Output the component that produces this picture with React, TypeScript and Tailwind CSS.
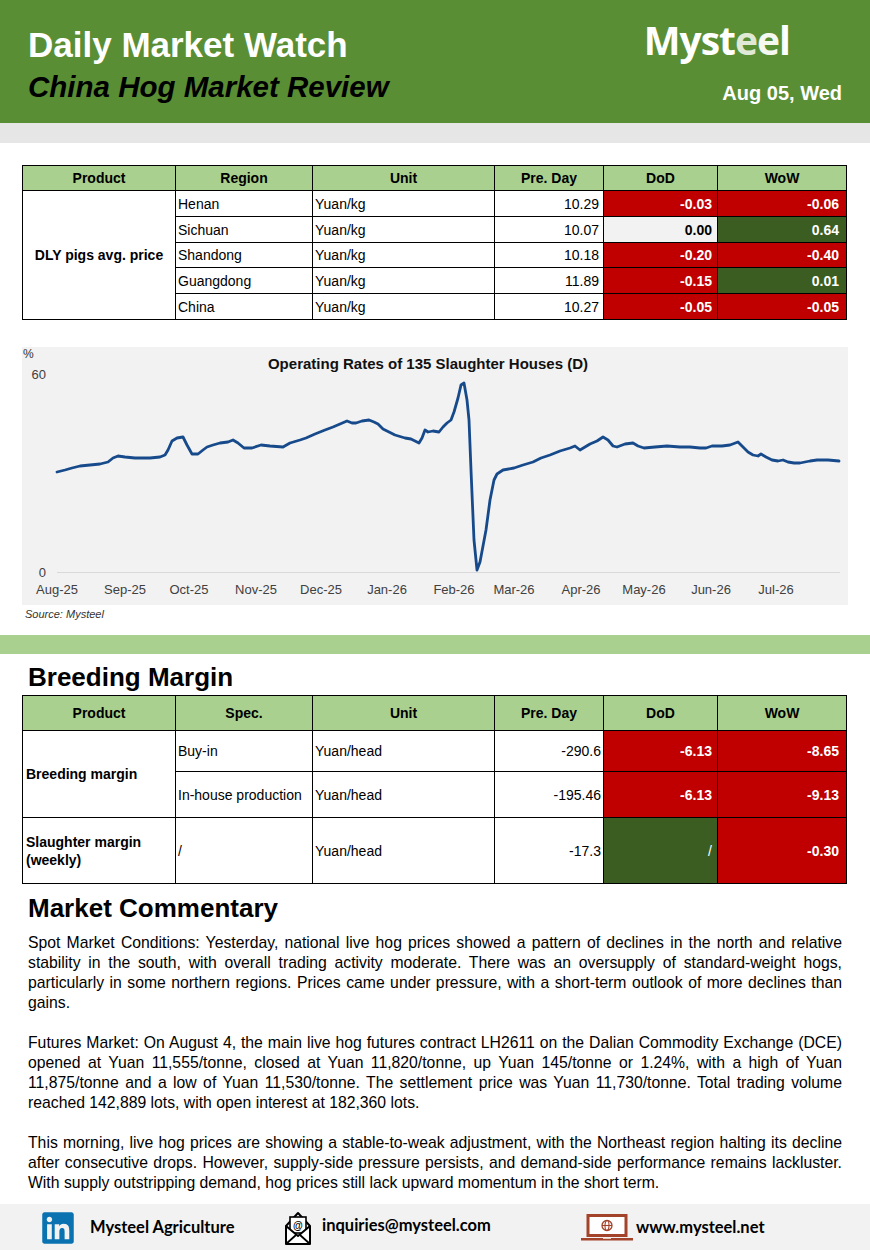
import { FaLinkedin } from 'react-icons/fa';

const FONT = "font-['Liberation_Sans',Arial,sans-serif]";

type Cell = { text: string; tone?: 'red' | 'green' | 'gray' };

const RED = 'bg-[#c00000] text-white font-bold';
const GREEN = 'bg-[#3b5d22] text-white font-bold';
const GRAY = 'bg-[#f2f2f2] text-black font-bold';

function tone(c: Cell) {
  if (c.tone === 'red') return RED;
  if (c.tone === 'green') return GREEN;
  if (c.tone === 'gray') return GRAY;
  return '';
}

const hogRows: { region: string; pre: string; dod: Cell; wow: Cell }[] = [
  { region: 'Henan', pre: '10.29', dod: { text: '-0.03', tone: 'red' }, wow: { text: '-0.06', tone: 'red' } },
  { region: 'Sichuan', pre: '10.07', dod: { text: '0.00', tone: 'gray' }, wow: { text: '0.64', tone: 'green' } },
  { region: 'Shandong', pre: '10.18', dod: { text: '-0.20', tone: 'red' }, wow: { text: '-0.40', tone: 'red' } },
  { region: 'Guangdong', pre: '11.89', dod: { text: '-0.15', tone: 'red' }, wow: { text: '0.01', tone: 'green' } },
  { region: 'China', pre: '10.27', dod: { text: '-0.05', tone: 'red' }, wow: { text: '-0.05', tone: 'red' } },
];

// chart line, page coordinates
const pts: [number, number][] = [
  [57, 472], [65, 470], [72, 468], [80, 466], [90, 465], [100, 464], [108, 462], [113, 458], [118, 456],
  [125, 457], [135, 458], [150, 458], [160, 457], [165, 455], [168, 450], [172, 441], [177, 438], [183, 437],
  [187, 445], [192, 454], [198, 454], [203, 450], [207, 447], [213, 445], [220, 443], [228, 442], [233, 440],
  [238, 443], [244, 448], [252, 448], [261, 445], [270, 446], [283, 447], [290, 443], [300, 440], [306, 438],
  [315, 434], [325, 430], [333, 427], [340, 424], [347, 421], [352, 423], [356, 423], [362, 421], [369, 420],
  [374, 422], [378, 424], [383, 429], [389, 432], [395, 435], [405, 438], [411, 439], [415, 441], [419, 443],
  [422, 438], [425, 430], [428, 432], [433, 431], [439, 432], [443, 427], [447, 423], [451, 420], [454, 412],
  [458, 398], [461, 385], [464, 383], [467, 400], [469, 420], [471, 470], [474, 540], [477, 570], [480, 562],
  [486, 530], [490, 500], [494, 480], [497, 474], [503, 470], [514, 468], [523, 465], [533, 462], [541, 458],
  [550, 455], [560, 451], [570, 448], [575, 446], [580, 450], [590, 444], [597, 441], [603, 437], [608, 440],
  [613, 446], [617, 447], [625, 444], [633, 443], [638, 446], [644, 448], [655, 447], [667, 446], [680, 447],
  [690, 447], [700, 448], [706, 448], [712, 446], [722, 446], [730, 445], [738, 442], [742, 446], [748, 452],
  [753, 455], [758, 456], [761, 454], [766, 457], [772, 460], [778, 461], [783, 460], [788, 462], [794, 463],
  [800, 463], [810, 461], [817, 460], [828, 460], [839, 461],
];

const months: [string, number][] = [
  ['Aug-25', 57], ['Sep-25', 125], ['Oct-25', 189], ['Nov-25', 256], ['Dec-25', 321], ['Jan-26', 387],
  ['Feb-26', 454], ['Mar-26', 514], ['Apr-26', 581], ['May-26', 644], ['Jun-26', 711], ['Jul-26', 776],
];

function Chart() {
  const line = pts.map(([x, y]) => `${x - 22},${y - 347}`).join(' ');
  return (
    <div className="mx-[22px] mt-[27px] h-[258px] bg-[#f2f2f2]">
      <svg width="825" height="258" viewBox="0 0 825 258" className="block">
        <text x="1" y="11" fontSize="12" fill="#333" fontFamily="Liberation Sans, Arial, sans-serif">%</text>
        <text x="406" y="22" fontSize="15" fontWeight="bold" textAnchor="middle" fill="#111" fontFamily="Liberation Sans, Arial, sans-serif">
          Operating Rates of 135 Slaughter Houses (D)
        </text>
        <text x="24" y="32" fontSize="13" textAnchor="end" fill="#404040" fontFamily="Liberation Sans, Arial, sans-serif">60</text>
        <text x="24" y="230" fontSize="13" textAnchor="end" fill="#404040" fontFamily="Liberation Sans, Arial, sans-serif">0</text>
        <line x1="35" y1="225.5" x2="818" y2="225.5" stroke="#d9d9d9" strokeWidth="1" />
        {months.map(([m, x]) => (
          <text key={m} x={x - 22} y="247" fontSize="13" textAnchor="middle" fill="#404040" fontFamily="Liberation Sans, Arial, sans-serif">
            {m}
          </text>
        ))}
        <polyline points={line} fill="none" stroke="#174a8b" strokeWidth="2.8" strokeLinejoin="round" strokeLinecap="round" />
      </svg>
    </div>
  );
}

function Colgroup() {
  return (
    <colgroup>
      <col className="w-[153px]" />
      <col className="w-[137px]" />
      <col className="w-[182px]" />
      <col className="w-[109px]" />
      <col className="w-[114px]" />
      <col className="w-[129px]" />
    </colgroup>
  );
}

const th = 'border border-black bg-[#a9d08e] font-bold text-center';
const td = 'border border-black';

function HeadRow({ second }: { second: string }) {
  return (
    <tr>
      <th className={th}>Product</th>
      <th className={th}>{second}</th>
      <th className={th}>Unit</th>
      <th className={th}>Pre. Day</th>
      <th className={th}>DoD</th>
      <th className={th}>WoW</th>
    </tr>
  );
}

function HogTable() {
  return (
    <table className="mx-[22px] mt-[22px] w-[824px] table-fixed border-collapse text-[14px] leading-[16px] text-black">
      <Colgroup />
      <thead className="h-[25px]">
        <HeadRow second="Region" />
      </thead>
      <tbody>
        {hogRows.map((r, i) => (
          <tr key={r.region} className={i === 2 ? 'h-[25px]' : 'h-[26px]'}>
            {i === 0 && (
              <td rowSpan={5} className={`${td} text-center font-bold`}>
                DLY pigs avg. price
              </td>
            )}
            <td className={`${td} pl-[2px]`}>{r.region}</td>
            <td className={`${td} pl-[2px]`}>Yuan/kg</td>
            <td className={`${td} pr-[4px] text-right`}>{r.pre}</td>
            <td className={`${td} pr-[5px] text-right ${tone(r.dod)}`}>{r.dod.text}</td>
            <td className={`${td} pr-[7px] text-right ${tone(r.wow)}`}>{r.wow.text}</td>
          </tr>
        ))}
      </tbody>
    </table>
  );
}

function MarginTable() {
  return (
    <table className="mx-[22px] mt-[4px] w-[824px] table-fixed border-collapse text-[14px] leading-[18px] text-black">
      <Colgroup />
      <thead className="h-[35px]">
        <HeadRow second="Spec." />
      </thead>
      <tbody>
        <tr className="h-[41px]">
          <td rowSpan={2} className={`${td} pl-[3px] font-bold`}>Breeding margin</td>
          <td className={`${td} pl-[2px]`}>Buy-in</td>
          <td className={`${td} pl-[2px]`}>Yuan/head</td>
          <td className={`${td} pr-[2px] text-right`}>-290.6</td>
          <td className={`${td} pr-[5px] text-right ${RED}`}>-6.13</td>
          <td className={`${td} pr-[7px] text-right ${RED}`}>-8.65</td>
        </tr>
        <tr className="h-[46px]">
          <td className={`${td} pl-[2px]`}>In-house production</td>
          <td className={`${td} pl-[2px]`}>Yuan/head</td>
          <td className={`${td} pr-[2px] text-right`}>-195.46</td>
          <td className={`${td} pr-[5px] text-right ${RED}`}>-6.13</td>
          <td className={`${td} pr-[7px] text-right ${RED}`}>-9.13</td>
        </tr>
        <tr className="h-[66px]">
          <td className={`${td} pl-[3px] font-bold`}>
            Slaughter margin
            <br />
            (weekly)
          </td>
          <td className={`${td} pl-[2px]`}>/</td>
          <td className={`${td} pl-[2px]`}>Yuan/head</td>
          <td className={`${td} pr-[2px] text-right`}>-17.3</td>
          <td className={`${td} pr-[5px] text-right ${GREEN} !font-normal`}>/</td>
          <td className={`${td} pr-[7px] text-right ${RED}`}>-0.30</td>
        </tr>
      </tbody>
    </table>
  );
}

function EnvelopeIcon() {
  return (
    <svg width="28" height="36" viewBox="0 0 28 36">
      <path d="M2 16 L14 3 L26 16" fill="#fff" stroke="#000" strokeWidth="2" strokeLinejoin="round" />
      <rect x="6" y="7" width="16" height="16" fill="#fff" stroke="#000" strokeWidth="1.6" />
      <text x="14" y="19" fontSize="10" textAnchor="middle" fill="#000" fontFamily="Liberation Sans, Arial, sans-serif">@</text>
      <path d="M2 16 V34 H26 V16 L14 26 Z" fill="#fff" stroke="#000" strokeWidth="2" strokeLinejoin="round" />
      <path d="M2 34 L12 25 M26 34 L16 25" stroke="#000" strokeWidth="1.8" />
    </svg>
  );
}

function LaptopIcon() {
  return (
    <svg width="54" height="28" viewBox="0 0 54 28">
      <rect x="8" y="1.5" width="38" height="20" fill="#fff" stroke="#a3432a" strokeWidth="3" />
      <circle cx="27" cy="11.5" r="5" fill="none" stroke="#a3432a" strokeWidth="1.3" />
      <ellipse cx="27" cy="11.5" rx="2" ry="5" fill="none" stroke="#a3432a" strokeWidth="1.1" />
      <line x1="22" y1="11.5" x2="32" y2="11.5" stroke="#a3432a" strokeWidth="1.1" />
      <path d="M1 24 H53 V26.5 H1 Z" fill="#a3432a" />
      <path d="M23 24 H31 V25 H23 Z" fill="#e9c9bd" />
    </svg>
  );
}

function Footer() {
  return (
    <div className="mt-[11px] flex h-[47px] items-center bg-[#f2f2f2] font-['Lato','Open_Sans',sans-serif] text-[16.5px] font-bold text-black">
      <div className="flex w-[284px] items-center pl-[40px]">
        <FaLinkedin className="text-[#0a72b1]" size={36} />
        <span className="ml-[14px]">Mysteel Agriculture</span>
      </div>
      <div className="flex w-[296px] items-center">
        <EnvelopeIcon />
        <span className="ml-[10px] -mt-[4px]">inquiries@mysteel.com</span>
      </div>
      <div className="flex items-center">
        <LaptopIcon />
        <span className="ml-[2px]">www.mysteel.net</span>
      </div>
    </div>
  );
}

export default function App() {
  return (
    <div className={`${FONT} w-[870px] bg-white text-black`}>
      {/* Header */}
      <div className="flex h-[123px] justify-between bg-[#5a8e34]">
        <div className="pl-[28px] pt-[28px]">
          <div className="text-[35px] font-bold leading-[34px] text-white">Daily Market Watch</div>
          <div className="mt-[10px] text-[29.5px] font-bold italic leading-[30px] text-black">China Hog Market Review</div>
        </div>
        <div className="flex flex-col items-end pr-[28px] pt-[17px]">
          <div className="mr-[52px] font-['Open_Sans',sans-serif] text-[39px] font-bold leading-[46px] tracking-[-1px] text-white">
            Myst<span className="text-[#dfe9d6]">e</span><span className="text-[#f4f8f0]">e</span>l
          </div>
          <div className="mt-[21px] text-[20px] font-bold leading-[19px] text-white">Aug 05, Wed</div>
        </div>
      </div>
      <div className="h-[20px] bg-[#e6e6e6]" />

      <HogTable />

      <Chart />
      <div className="pl-[25px] pt-[2px] text-[11px] italic leading-[14px] text-[#333]">Source: Mysteel</div>

      <div className="mt-[14px] h-[19px] bg-[#a9d08e]" />

      <h2 className="mt-[9px] pl-[28px] text-[26px] font-bold leading-[28px]">Breeding Margin</h2>
      <MarginTable />

      <h2 className="mt-[10px] pl-[28px] text-[26px] font-bold leading-[28px]">Market Commentary</h2>
      <div className="mt-[11px] px-[28px] text-justify text-[15.75px] leading-[20px]">
        <p className="mb-[20px]">
          Spot Market Conditions: Yesterday, national live hog prices showed a pattern of declines in the north and relative
          stability in the south, with overall trading activity moderate. There was an oversupply of standard-weight hogs,
          particularly in some northern regions. Prices came under pressure, with a short-term outlook of more declines than
          gains.
        </p>
        <p className="mb-[20px]">
          Futures Market: On August 4, the main live hog futures contract LH2611 on the Dalian Commodity Exchange (DCE)
          opened at Yuan 11,555/tonne, closed at Yuan 11,820/tonne, up Yuan 145/tonne or 1.24%, with a high of Yuan
          11,875/tonne and a low of Yuan 11,530/tonne. The settlement price was Yuan 11,730/tonne. Total trading volume
          reached 142,889 lots, with open interest at 182,360 lots.
        </p>
        <p>
          This morning, live hog prices are showing a stable-to-weak adjustment, with the Northeast region halting its decline
          after consecutive drops. However, supply-side pressure persists, and demand-side performance remains lackluster.
          With supply outstripping demand, hog prices still lack upward momentum in the short term.
        </p>
      </div>

      <Footer />
    </div>
  );
}
